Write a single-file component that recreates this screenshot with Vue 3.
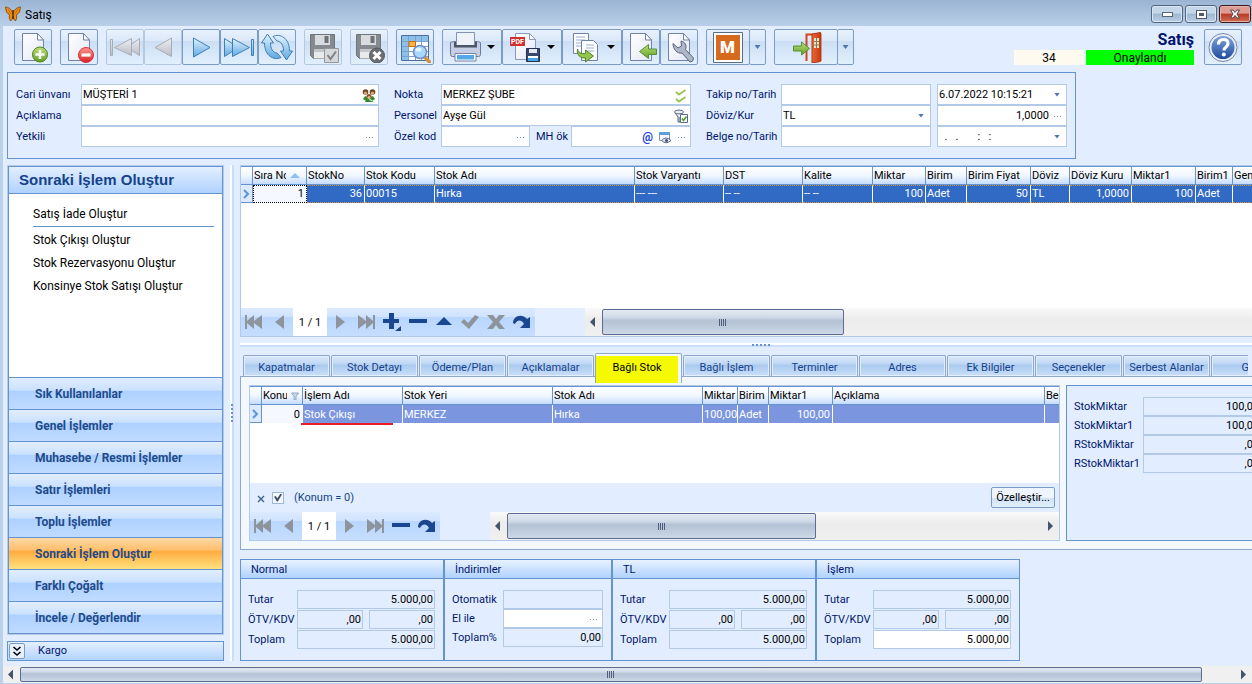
<script setup>
import { ref } from 'vue'

const toolGroups = [
  [{ icon: 'page-add', label: 'Yeni' }],
  [{ icon: 'page-del', label: 'Sil' }],
  [
    { icon: 'nav-first', label: 'İlk', off: true },
    { icon: 'nav-prev', label: 'Önceki', off: true },
    { icon: 'nav-next', label: 'Sonraki' },
    { icon: 'nav-last', label: 'Son' },
    { icon: 'refresh', label: 'Yenile' },
  ],
  [{ icon: 'save-ok', label: 'Kaydet', off: true }],
  [{ icon: 'save-cancel', label: 'Vazgeç', off: true }],
  [{ icon: 'find', label: 'Bul' }],
  [
    { icon: 'printer', label: 'Yazdır', menu: true },
    { icon: 'pdf', label: 'PDF', menu: true, mark: 'PDF' },
    { icon: 'copy', label: 'Kopyala', menu: true },
    { icon: 'page-back', label: 'Aktar' },
    { icon: 'page-tool', label: 'Ayarlar' },
  ],
]

const groups = [
  'Sık Kullanılanlar',
  'Genel İşlemler',
  'Muhasebe / Resmi İşlemler',
  'Satır İşlemleri',
  'Toplu İşlemler',
  'Sonraki İşlem Oluştur',
  'Farklı Çoğalt',
  'İncele / Değerlendir',
]
const activeGroup = ref('Sonraki İşlem Oluştur')

const actions = ['Satış İade Oluştur', 'Stok Çıkışı Oluştur', 'Stok Rezervasyonu Oluştur', 'Konsinye Stok Satışı Oluştur']

const stockCols = [
  { title: 'Sıra No', w: 54, value: '1', num: true, sort: true },
  { title: 'StokNo', w: 58, value: '36', num: true },
  { title: 'Stok Kodu', w: 70, value: '00015' },
  { title: 'Stok Adı', w: 200, value: 'Hırka' },
  { title: 'Stok Varyantı', w: 89, value: '--- ---' },
  { title: 'DST', w: 79, value: '-- --' },
  { title: 'Kalite', w: 70, value: '-- --' },
  { title: 'Miktar', w: 53, value: '100', num: true },
  { title: 'Birim', w: 41, value: 'Adet' },
  { title: 'Birim Fiyat', w: 64, value: '50', num: true },
  { title: 'Döviz', w: 39, value: 'TL' },
  { title: 'Döviz Kuru', w: 62, value: '1,0000', num: true },
  { title: 'Miktar1', w: 64, value: '100', num: true },
  { title: 'Birim1', w: 37, value: 'Adet' },
  { title: 'Genel', w: 60, value: '' },
]

const linkedCols = [
  { title: 'Konum', w: 41, value: '0', num: true, filter: true },
  { title: 'İşlem Adı', w: 100, value: 'Stok Çıkışı' },
  { title: 'Stok Yeri', w: 150, value: 'MERKEZ' },
  { title: 'Stok Adı', w: 150, value: 'Hırka' },
  { title: 'Miktar', w: 35, value: '100,00' },
  { title: 'Birim', w: 31, value: 'Adet' },
  { title: 'Miktar1', w: 64, value: '100,00', num: true },
  { title: 'Açıklama', w: 212, value: '' },
  { title: 'Belge', w: 60, value: '' },
]

const tabs = [
  'Kapatmalar', 'Stok Detayı', 'Ödeme/Plan', 'Açıklamalar', 'Bağlı Stok', 'Bağlı İşlem',
  'Terminler', 'Adres', 'Ek Bilgiler', 'Seçenekler', 'Serbest Alanlar', 'Gider',
]
const activeTab = ref('Bağlı Stok')

const recordNav = ['r-next', 'r-last', 'r-add', 'r-minus', 'r-up', 'r-check', 'r-cross', 'r-redo']
const linkedNav = ['r-next', 'r-last', 'r-minus', 'r-redo']
const coloured = ['r-add', 'r-minus', 'r-up', 'r-redo']

const amounts = [
  { label: 'StokMiktar', value: '100,00' },
  { label: 'StokMiktar1', value: '100,00' },
  { label: 'RStokMiktar', value: ',00' },
  { label: 'RStokMiktar1', value: ',00' },
]

const totals = [
  { title: 'Normal', rows: [['Tutar', '5.000,00'], ['ÖTV/KDV', ',00', ',00'], ['Toplam', '5.000,00']] },
  { title: 'İndirimler', small: true, rows: [['Otomatik', ''], ['El ile', ''], ['Toplam%', '0,00']], open: 1, more: true },
  { title: 'TL', rows: [['Tutar', '5.000,00'], ['ÖTV/KDV', ',00', ',00'], ['Toplam', '5.000,00']] },
  { title: 'İşlem', rows: [['Tutar', '5.000,00'], ['ÖTV/KDV', ',00', ',00'], ['Toplam', '5.000,00']], open: 2 },
]
</script>

<template>
  <div class="window">
    <svg class="sprite" aria-hidden="true">
      <defs>
        <linearGradient id="g-page" x1="0" y1="0" x2="1" y2="1">
          <stop offset="0" stop-color="#ffffff" /><stop offset="1" stop-color="#e3e8f5" />
        </linearGradient>
        <linearGradient id="g-blue" x1="0" y1="0" x2="0" y2="1">
          <stop offset="0" stop-color="#e2f3ff" /><stop offset="1" stop-color="#5fa9e2" />
        </linearGradient>
        <linearGradient id="g-grey" x1="0" y1="0" x2="0" y2="1">
          <stop offset="0" stop-color="#eceef1" /><stop offset="1" stop-color="#b9bec6" />
        </linearGradient>
        <linearGradient id="g-green" x1="0" y1="0" x2="0" y2="1">
          <stop offset="0" stop-color="#c0e07c" /><stop offset="1" stop-color="#5f9f22" />
        </linearGradient>
        <linearGradient id="g-red" x1="0" y1="0" x2="0" y2="1">
          <stop offset="0" stop-color="#ff9a92" /><stop offset="1" stop-color="#d61f24" />
        </linearGradient>
        <linearGradient id="g-help" x1="0" y1="0" x2="0" y2="1">
          <stop offset="0" stop-color="#7fa3dc" /><stop offset="1" stop-color="#1f4b9c" />
        </linearGradient>
        <linearGradient id="g-door" x1="0" y1="0" x2="1" y2="0">
          <stop offset="0" stop-color="#ee6636" /><stop offset="1" stop-color="#c43c12" />
        </linearGradient>
      </defs>
      <symbol id="page" viewBox="0 0 32 32">
        <path d="M5.500 2.500h15l6 6.500v20.500h-21z" fill="url(#g-page)" stroke="#7082a8" />
        <path d="M20.500 2.500v6.500h6z" fill="#fff" stroke="#7082a8" />
      </symbol>
      <symbol id="page-add" viewBox="0 0 32 32">
        <use href="#page" />
        <circle cx="23" cy="23.500" r="7.500" fill="url(#g-green)" stroke="#4d7f20" />
        <path d="M23 19v9M18.500 23.500h9" stroke="#fff" stroke-width="2.600" />
      </symbol>
      <symbol id="page-del" viewBox="0 0 32 32">
        <use href="#page" />
        <circle cx="23" cy="24" r="7.500" fill="url(#g-red)" stroke="#d8333a" />
        <path d="M18.500 24h9" stroke="#fff" stroke-width="3.200" />
      </symbol>
      <symbol id="nav-first" viewBox="0 0 32 32">
        <g fill="url(#g-grey)" stroke="#a7acb5">
          <path d="M1.500 8.500h2v16h-2zM30.500 7.500v17L18 16.500z" /><path d="M22.500 7.500v17L5.500 16.500z" />
        </g>
      </symbol>
      <symbol id="nav-prev" viewBox="0 0 32 32">
        <path d="M24.500 7v18.500L8 16.500z" fill="url(#g-grey)" stroke="#a7acb5" />
      </symbol>
      <symbol id="nav-next" viewBox="0 0 32 32">
        <path d="M8.500 7v19l16.500-9.500z" fill="url(#g-blue)" stroke="#3f7eb5" />
      </symbol>
      <symbol id="nav-last" viewBox="0 0 32 32">
        <g fill="url(#g-blue)" stroke="#3f7eb5">
          <path d="M28.500 8.500h2v16h-2zM1.500 7.500v18l14-9z" /><path d="M9.500 7.500v18l17-9z" />
        </g>
      </symbol>
      <symbol id="refresh" viewBox="0 0 32 32">
        <g fill="url(#g-blue)" stroke="#3f7eb5" stroke-linejoin="round">
          <path d="M6.500 3l6 9h-3c0 6 2.500 9.500 6.500 10l4 4.500C13 30 3.500 25 3.500 12h-3z" />
          <path d="M25.500 29l-6-9h3c0-6-2.500-9.500-6.500-10l-4-4.500C19 2 28.500 7 28.500 20h3z" />
        </g>
      </symbol>
      <symbol id="disk" viewBox="0 0 32 32">
        <path d="M3.500 3.500h24v24h-21l-3-3z" fill="#858a90" stroke="#6f747a" />
        <path d="M8 4h15v10H8z" fill="#d9dcdf" /><path d="M17.500 5h4v7h-4z" fill="#6d7278" />
        <path d="M7 18h17v9.500H7z" fill="#e8eaec" /><path d="M7 18h17v3H7z" fill="#c4c7ca" />
      </symbol>
      <symbol id="save-ok" viewBox="0 0 32 32">
        <use href="#disk" />
        <path d="M17.500 17.500h14v14h-14z" fill="#d5d7da" stroke="#93979c" />
        <path d="M20.500 24l3 4 5.500-7.500" fill="none" stroke="#7e8388" stroke-width="2" />
      </symbol>
      <symbol id="save-cancel" viewBox="0 0 32 32">
        <use href="#disk" />
        <circle cx="24" cy="24.500" r="7.500" fill="#6b6f74" stroke="#55595e" />
        <path d="M20.500 21l7 7M27.500 21l-7 7" stroke="#fff" stroke-width="3" />
      </symbol>
      <symbol id="find" viewBox="0 0 32 32">
        <path d="M2.500 4.500h27v25h-27z" fill="#fff" stroke="#4c6f9e" />
        <path d="M3 5h26v5H3zM3 5h6v24H3z" fill="#8cc0e8" />
        <path d="M3 10.500h26M3 15.500h26M3 20.500h26M3 25.500h26M9.500 5v24M16.500 5v24M22.500 5v24" stroke="#7aa2cf" />
        <path d="M10 10.500h6.500v5H10z" fill="#ffb240" stroke="#c46d10" />
        <path d="M25.500 26l5 5" stroke="#d3904a" stroke-width="3.500" stroke-linecap="round" />
        <circle cx="21" cy="21" r="6.500" fill="#a8d8ff" stroke="#6f8fc6" stroke-width="1.500" />
        <ellipse cx="19.500" cy="18.500" rx="3" ry="2" fill="#e8f6ff" />
      </symbol>
      <symbol id="printer" viewBox="0 0 32 32">
        <path d="M1.500 11.500l3-1h24l3 1v12q0 2-2 2h-26q-2 0-2-2z" fill="#c5cee2" stroke="#6d7a99" />
        <path d="M7.500 1.500h18v13h-18z" fill="#eef2fa" stroke="#8391b3" />
        <path d="M5 11h2v3h19v-3h2v5.500H5z" fill="#4b5469" /><path d="M6 22.500h21v7.500H6z" fill="#fff" stroke="#7383a5" />
        <path d="M8 24h17v4.500H8z" fill="#54a8e6" />
      </symbol>
      <symbol id="pdf" viewBox="0 0 32 32">
        <path d="M6.500 2.500h14l6 6v20h-20z" fill="url(#g-page)" stroke="#8b98b8" />
        <path d="M20.500 2.500v6h6z" fill="#fff" stroke="#8b98b8" />
        <path d="M1 6h15v9H1z" fill="#cf3030" />
        <path d="M17.500 17.500h13v13h-13z" fill="#38476a" stroke="#253252" />
        <path d="M20 18h8v4h-8z" fill="#e3e8f2" /><path d="M19 25h10v5H19z" fill="#fff" /><path d="M19 27h10v3H19z" fill="#45a5e8" />
      </symbol>
      <symbol id="copy" viewBox="0 0 32 32">
        <path d="M4.500 2.500h15v20h-15z" fill="#fbfcff" stroke="#7082a8" />
        <path d="M7 6h9M7 9h9M7 12h9M7 15h6" stroke="#9eb0d2" />
        <path d="M12.500 9.500h12l4 4v16h-16z" fill="#fbfcff" stroke="#7082a8" />
        <path d="M17 14h8M17 17h8M17 20h8" stroke="#9eb0d2" />
        <path d="M8.500 18c1 4 4 5 8 4.500v-3.500l8 6-8 6v-4c-5 .5-9-3-8-9z" fill="#93c44b" stroke="#55862a" />
      </symbol>
      <symbol id="arrow-green" viewBox="0 0 32 32">
        <path d="M31.500 18v5.500h-8v4l-9-7 9-7V18z" fill="url(#g-green)" stroke="#568f38" />
      </symbol>
      <symbol id="page-back" viewBox="0 0 32 32"><use href="#page" /><use href="#arrow-green" /></symbol>
      <symbol id="page-tool" viewBox="0 0 32 32">
        <use href="#page" />
        <path d="M10 12.500l5 4.500 3.500-2-.5-5c4 1 6 4 4.500 8.500l8 8.500q0 4-3.500 4l-8-9c-5 1-9-4-9-9.500z" fill="#aeb7c8" stroke="#58637c" />
      </symbol>
      <symbol id="module" viewBox="0 0 32 32">
        <path d="M1.500 1.500h29v30h-29z" fill="#fff" stroke="#5e6a80" />
        <path d="M4 4h24v25H4z" fill="#d66a1f" />
      </symbol>
      <symbol id="door" viewBox="0 0 32 32">
        <path d="M16.500 30V3.500h14V30" fill="none" stroke="#d2451e" stroke-width="2" />
        <path d="M22 3l8.500-1.500v29L22 32z" fill="url(#g-door)" stroke="#b03a14" />
        <path d="M24 7h5v10h-5z" fill="#e4e8c8" /><path d="M26.500 7v10M24 10.500h5M24 14h5" stroke="#8c7850" />
        <path d="M3.500 15h8v-4l8 6.500-8 6.500v-4h-8z" fill="url(#g-green)" stroke="#568f38" />
      </symbol>
      <symbol id="help" viewBox="0 0 32 32">
        <circle cx="16" cy="16.500" r="14" fill="#e9eef7" stroke="#7688ac" />
        <circle cx="16" cy="16.500" r="11.500" fill="url(#g-help)" />
        <path d="M11.500 13.500q0-5 5-5 4.500 0 4.500 4 0 2-2.500 4-1.500 1-1.500 3" fill="none" stroke="#fff" stroke-width="3.200" />
        <circle cx="16.800" cy="23.500" r="2" fill="#fff" />
      </symbol>

      <symbol id="r-first" viewBox="0 0 20 20"><path d="M1 3h2v6l7-6v6l8-6v14l-8-6v6l-7-6v6H1z" /></symbol>
      <symbol id="r-prev" viewBox="0 0 20 20"><path d="M14 3v14L5 10z" /></symbol>
      <symbol id="r-next" viewBox="0 0 20 20"><path d="M6 3v14l9-7z" /></symbol>
      <symbol id="r-last" viewBox="0 0 20 20"><path d="M19 3h-2v6l-7-6v6L2 3v14l8-6v6l7-6v6h2z" /></symbol>
      <symbol id="r-add" viewBox="0 0 20 20"><path d="M7 1h5v6h5v4h-5v6H7v-6H1V7h6zM19 14v5h-6z" /></symbol>
      <symbol id="r-minus" viewBox="0 0 20 20"><path d="M1 7h18v4H1z" /></symbol>
      <symbol id="r-up" viewBox="0 0 20 20"><path d="M10 5l8 8H2z" /></symbol>
      <symbol id="r-check" viewBox="0 0 20 20"><path d="M1 10l3-3 4 4 7-8 4 2-10 12z" /></symbol>
      <symbol id="r-cross" viewBox="0 0 20 20"><path d="M1 3h6l3 4 3-4h6l-6 7 6 7h-6l-3-4-3 4H1l6-7z" /></symbol>
      <symbol id="r-redo" viewBox="0 0 20 20"><path d="M1 11C1 4 10 1 15 7l3-2v11H8l4-4c-3-5-7-4-9 0z" /></symbol>

      <symbol id="people" viewBox="0 0 16 16">
        <path d="M2 12q1.500-3 3-3l3 4-3 1zM14 12q-1.500-3-3-3l-3 4 3 1zM4 15q1-3 4-3t4 3z" fill="#2f8b2f" />
        <circle cx="4.500" cy="5" r="2.800" fill="#6b4420" /><circle cx="11.500" cy="5" r="2.800" fill="#6b4420" />
        <circle cx="4.500" cy="6" r="1.600" fill="#e0a878" /><circle cx="11.500" cy="6" r="1.600" fill="#e0a878" />
        <circle cx="8" cy="9.500" r="2.500" fill="#8a5325" /><circle cx="8" cy="10.500" r="1.500" fill="#e8b88c" />
      </symbol>
      <symbol id="checks" viewBox="0 0 16 16">
        <path d="M3 5l3 2.500L12.500 3M3 12l3 2.500L12.500 10" fill="none" stroke="#9cc455" stroke-width="2" />
      </symbol>
      <symbol id="pick" viewBox="0 0 16 16">
        <ellipse cx="6" cy="4" rx="4.500" ry="2" fill="#e8ecf2" stroke="#5b6b85" />
        <path d="M2 5l3 4v5h2V9" fill="#c6cfdd" stroke="#5b6b85" />
        <path d="M7.500 6.500h7v8h-7z" fill="#fff" stroke="#5b6b85" />
        <path d="M9 10.500l1.500 2 3-4" fill="none" stroke="#4aa02c" stroke-width="1.600" />
      </symbol>
      <symbol id="view" viewBox="0 0 16 16">
        <path d="M2.500 3.500h10v8h-10z" fill="#f5f8fc" stroke="#8494ae" /><path d="M2 3h11v3H2z" fill="#5f9ed8" />
        <path d="M4.500 11.500q4.500-5 9.500 0-5 4.500-9.500 0z" fill="#e4eaf3" stroke="#5b6b85" /><circle cx="9.500" cy="11.500" r="1.500" fill="#43536f" />
      </symbol>
      <symbol id="butterfly" viewBox="0 0 16 16">
        <path d="M8 8C7 3 3 1 .5 1q0 6 4 8-1 3 1 6 2-1 2.500-5 .5 4 2.500 5 2-3 1-6 4-2 4-8C13 1 9 3 8 8z" fill="#f08c10" stroke="#7a4505" stroke-width=".8" />
        <path d="M8 4v9" stroke="#4e2c05" stroke-width="1.400" /><path d="M3 3l3 5M13 3l-3 5" stroke="#a85a08" stroke-width=".6" />
      </symbol>
    </svg>

    <header class="titlebar">
      <svg class="logo"><use href="#butterfly" /></svg>
      <span class="caption">Satış</span>
      <button class="winbtn" aria-label="Simge durumuna küçült"><i class="min"></i></button>
      <button class="winbtn" aria-label="Önceki boyut"><i class="max"></i></button>
      <button class="winbtn close" aria-label="Kapat">
        <svg viewBox="0 0 12 10"><path d="M1.500 1h2.500l2 2.500L8 1h2.500L8 5l2.500 4H8L6 6.500 4 9H1.500L4 5z" fill="#fff" stroke="#55404a" /></svg>
      </button>
    </header>

    <div class="client">
      <div class="toolbar">
        <div v-for="(group, i) in toolGroups" :key="i" class="toolgroup">
          <button v-for="t in group" :key="t.icon" class="tool" :class="{ off: t.off, menu: t.menu }" :aria-label="t.label">
            <svg class="big"><use :href="'#' + t.icon" /><text v-if="t.mark" class="pdfmark" x="2" y="13">{{ t.mark }}</text></svg>
            <i v-if="t.menu" class="caret black"></i>
          </button>
        </div>
        <div class="toolgroup split">
          <button class="tool" aria-label="Modül"><svg class="big"><use href="#module" /><text class="modmark" x="8" y="22">M</text></svg></button>
          <button class="tool drop" aria-label="Modül menüsü"><i class="caret"></i></button>
        </div>
        <div class="toolgroup split wide">
          <button class="tool" aria-label="Çıkış"><svg class="big"><use href="#door" /></svg></button>
          <button class="tool drop" aria-label="Çıkış menüsü"><i class="caret"></i></button>
        </div>
        <div class="status">
          <strong>Satış</strong>
          <div class="badges"><span class="docno">34</span><span class="state">Onaylandı</span></div>
        </div>
        <button class="tool" aria-label="Yardım"><svg class="big"><use href="#help" /></svg></button>
      </div>

      <form class="panel" @submit.prevent>
        <div class="formcol first">
          <div class="formrow"><label for="cari">Cari ünvanı</label><div class="field"><input id="cari" value="MÜŞTERİ 1"><svg class="mini"><use href="#people" /></svg></div></div>
          <div class="formrow"><label for="aciklama">Açıklama</label><div class="field"><input id="aciklama"></div></div>
          <div class="formrow"><label for="yetkili">Yetkili</label><div class="field"><input id="yetkili"><button class="dots" aria-label="Seç"></button></div></div>
        </div>
        <div class="formcol second">
          <div class="formrow"><label for="nokta">Nokta</label><div class="field"><input id="nokta" value="MERKEZ ŞUBE"><svg class="mini"><use href="#checks" /></svg></div></div>
          <div class="formrow"><label for="personel">Personel</label><div class="field"><input id="personel" value="Ayşe Gül"><svg class="mini"><use href="#pick" /></svg></div></div>
          <div class="formrow">
            <label for="ozel">Özel kod</label><div class="field code"><input id="ozel"><button class="dots" aria-label="Seç"></button></div>
            <label for="mh" class="inner">MH ök</label><div class="field"><input id="mh"><span class="at">@</span><svg class="mini"><use href="#view" /></svg><button class="dots" aria-label="Seç"></button></div>
          </div>
        </div>
        <div class="formcol third">
          <div class="formrow"><label for="takip">Takip no/Tarih</label><div class="field"><input id="takip"></div></div>
          <div class="formrow"><label for="doviz">Döviz/Kur</label><div class="field"><select id="doviz"><option>TL</option></select><i class="caret"></i></div></div>
          <div class="formrow"><label for="belge">Belge no/Tarih</label><div class="field"><input id="belge"></div></div>
        </div>
        <div class="formcol fourth">
          <div class="formrow"><div class="field"><input value="6.07.2022 10:15:21" aria-label="Takip tarihi"><i class="caret"></i></div></div>
          <div class="formrow"><div class="field"><input class="right" value="1,0000" aria-label="Kur"><button class="dots" aria-label="Seç"></button></div></div>
          <div class="formrow"><div class="field"><input value="  .   .       :   :" aria-label="Belge tarihi"><i class="caret"></i></div></div>
        </div>
      </form>

      <div class="body">
        <aside class="sidebar">
          <nav class="navbox">
            <h2>{{ activeGroup }}</h2>
            <ul>
              <li v-for="a in actions" :key="a"><a href="#">{{ a }}</a></li>
            </ul>
            <button v-for="g in groups" :key="g" class="group" :class="{ active: g === activeGroup }" @click="activeGroup = g">{{ g }}</button>
          </nav>
          <div class="cargo">
            <button aria-label="Genişlet"><svg viewBox="0 0 12 12"><path d="M2.500 2l3.500 3L9.500 2M2.500 7L6 10l3.500-3" fill="none" stroke="#000" stroke-width="1.600" /></svg></button>
            <span>Kargo</span>
          </div>
        </aside>
        <div class="vsplit"><i v-for="n in 5" :key="n"></i></div>

        <main class="content">
          <section class="grid stock">
            <div class="tablewrap">
              <table>
                <colgroup><col class="ind"><col v-for="c in stockCols" :key="c.title" :style="{ width: c.w + 'px' }"></colgroup>
                <thead>
                  <tr>
                    <th></th>
                    <th v-for="c in stockCols" :key="c.title"><div class="th"><span>{{ c.title }}</span><i v-if="c.sort" class="sort"></i></div></th>
                  </tr>
                </thead>
                <tbody>
                  <tr>
                    <td class="mark"><svg viewBox="0 0 10 12"><path d="M3 2l4 4-4 4" /></svg></td>
                    <td v-for="(c, i) in stockCols" :key="c.title" :class="{ num: c.num, focus: i === 0 }">{{ c.value }}</td>
                  </tr>
                </tbody>
              </table>
            </div>
            <div class="footer">
              <div class="recnav">
                <button aria-label="r-first"><svg><use href="#r-first" /></svg></button>
                <button aria-label="r-prev"><svg><use href="#r-prev" /></svg></button>
                <span>1 / 1</span>
                <button v-for="n in recordNav" :key="n" :aria-label="n" :class="{ on: coloured.includes(n) }"><svg><use :href="'#' + n" /></svg></button>
              </div>
              <div class="hscroll">
                <i class="arrow left"></i><div class="thumb"></div>
              </div>
            </div>
          </section>

          <div class="hsplit"><i v-for="n in 5" :key="n"></i></div>

          <div class="tabs" role="tablist">
            <button v-for="t in tabs" :key="t" role="tab" :class="{ active: t === activeTab }" @click="activeTab = t"><span>{{ t }}</span></button>
          </div>
          <section class="tabpage">
            <div class="grid linked">
              <div class="tablewrap">
                <table>
                  <colgroup><col class="ind"><col v-for="c in linkedCols" :key="c.title" :style="{ width: c.w + 'px' }"></colgroup>
                  <thead>
                    <tr>
                      <th></th>
                      <th v-for="c in linkedCols" :key="c.title">
                        <div class="th"><span>{{ c.title }}</span><svg v-if="c.filter" class="funnel" viewBox="0 0 8 8"><path d="M.5 1h7L5 4.500V8H3V4.500z" fill="#c7d6ea" stroke="#8ea9cc" /></svg></div>
                      </th>
                    </tr>
                  </thead>
                  <tbody>
                    <tr>
                      <td class="mark"><svg viewBox="0 0 10 12"><path d="M3 2l4 4-4 4" /></svg></td>
                      <td v-for="(c, i) in linkedCols" :key="c.title" :class="{ num: c.num, focus: i === 0 }">{{ c.value }}</td>
                    </tr>
                  </tbody>
                </table>
                <div class="underline"></div>
              </div>
              <div class="filterbar">
                <button class="clear" aria-label="Filtreyi kaldır"><svg viewBox="0 0 8 8"><path d="M1 1l6 6M7 1L1 7" stroke="#3f5f8f" stroke-width="1.400" /></svg></button>
                <input id="flt" type="checkbox" checked>
                <label for="flt">(Konum = 0)</label>
                <button class="custom">Özelleştir...</button>
              </div>
              <div class="footer">
                <div class="recnav">
                  <button aria-label="r-first"><svg><use href="#r-first" /></svg></button>
                  <button aria-label="r-prev"><svg><use href="#r-prev" /></svg></button>
                  <span>1 / 1</span>
                  <button v-for="n in linkedNav" :key="n" :aria-label="n" :class="{ on: coloured.includes(n) }"><svg><use :href="'#' + n" /></svg></button>
                </div>
                <div class="hscroll">
                  <i class="arrow left"></i><div class="thumb"></div><i class="arrow end"></i>
                </div>
              </div>
            </div>
            <div class="amounts">
              <div v-for="(a, i) in amounts" :key="a.label" class="amountrow">
                <label :for="'amt' + i">{{ a.label }}</label>
                <div class="field locked"><input :id="'amt' + i" class="right" :value="a.value" readonly></div>
              </div>
            </div>
          </section>

          <section class="totals">
            <fieldset v-for="(box, b) in totals" :key="box.title" :class="{ small: box.small }" :aria-label="box.title">
              <h3>{{ box.title }}</h3>
              <div class="rows">
                <div v-for="(r, i) in box.rows" :key="r[0]" class="totalrow" :class="{ pair: r.length > 2 }">
                  <label :for="`t${b}${i}`">{{ r[0] }}</label>
                  <div class="field" :class="{ locked: box.open !== i }">
                    <input :id="`t${b}${i}`" class="right" :value="r[1]">
                    <button v-if="box.more && box.open === i" class="dots" aria-label="Seç"></button>
                  </div>
                  <div v-if="r.length > 2" class="field locked"><input class="right" :value="r[2]" aria-label="KDV"></div>
                </div>
              </div>
            </fieldset>
          </section>
        </main>
      </div>

      <div class="pagescroll">
        <i class="arrow left"></i><div class="thumb"></div><i class="arrow"></i>
      </div>
    </div>
  </div>
</template>

<style>
body {
  background: #b9d1ea;
}
</style>

<style scoped>
* {
  box-sizing: border-box;
}

.window {
  display: flex;
  flex-direction: column;
  height: 100vh;
  min-height: 620px;
  overflow: hidden;
  background: #b9d1ea;
  color: #00156e;
  font: 11px/14px Roboto, "Noto Sans", sans-serif;
}

button, input, select {
  font: inherit;
  color: inherit;
  margin: 0;
  padding: 0;
  border: 0;
  background: none;
  border-radius: 0;
}

.sprite {
  position: absolute;
  width: 0;
  height: 0;
}

.titlebar {
  display: flex;
  align-items: flex-start;
  gap: 2px;
  flex: none;
  height: 26px;
  padding: 5px 1px 0 5px;
  background: linear-gradient(#9ab4d2, #b9cfe8);
  color: #000;
}

.logo {
  width: 16px;
  height: 16px;
  margin-top: 1px;
}

.caption {
  flex: 1;
  margin: 3px 0 0 2px;
  font-size: 12px;
}

.winbtn {
  display: flex;
  align-items: center;
  justify-content: center;
  width: 32px;
  height: 18px;
  border: 1px solid #52667f;
  border-radius: 3px;
  background: linear-gradient(#c5d6e8 45%, #9fb8d2 50%, #b8cee4);
  box-shadow: inset 0 0 0 1px #d8e5f2;
}

.winbtn .min {
  width: 11px;
  height: 5px;
  border: 1px solid #5a6472;
  background: #fff;
}

.winbtn .max {
  width: 11px;
  height: 9px;
  border: 1px solid #4f5866;
  background: #4f5866;
  box-shadow: inset 0 0 0 2px #fff;
}

.winbtn.close {
  border-color: #44141c;
  background: linear-gradient(#dd9c92 45%, #b93a24 50%, #cd6f50);
  box-shadow: inset 0 0 0 1px #e5b0a6;
}

.winbtn svg {
  width: 12px;
  height: 10px;
}

.client {
  display: flex;
  flex-direction: column;
  flex: 1;
  min-height: 0;
  margin-left: 3px;
  margin-bottom: 1px;
  background: #e2eeff;
}

.toolbar {
  display: flex;
  gap: 8px;
  padding: 3px 10px 7px 11px;
}

.toolgroup {
  display: flex;
}

.tool {
  display: flex;
  align-items: center;
  justify-content: center;
  flex: none;
  width: 38px;
  height: 36px;
  border: 1px solid #7b9cc4;
  border-radius: 2px;
  background: linear-gradient(#e9f2fd 0, #dbe8f8 32%, #cbdef4 33%, #e2f0fd);
}

.tool.off {
  border-color: #b4c8e0;
}

.tool.menu {
  width: 60px;
  gap: 6px;
}

.big {
  width: 32px;
  height: 32px;
}

.pdfmark {
  fill: #fff;
  font-size: 7px;
  font-weight: 700;
}

.modmark {
  fill: #fff;
  font-size: 17px;
  font-weight: 900;
}

.split .tool:first-child {
  width: 44px;
}

.split.wide .tool:first-child {
  width: 64px;
}

.split .tool.drop {
  width: 17px;
  margin-left: -1px;
}

.caret {
  flex: none;
  width: 6px;
  height: 4px;
  background: #4a77b4;
  clip-path: polygon(0 0, 100% 0, 50% 100%);
}

.caret.black {
  width: 8px;
  background: #000;
}

.status {
  display: flex;
  flex-direction: column;
  align-items: flex-end;
  margin-left: auto;
  margin-right: 2px;
}

.status strong {
  height: 21px;
  font-size: 16px;
  line-height: 22px;
}

.badges {
  display: flex;
  gap: 2px;
  color: #000;
  font-size: 12px;
  line-height: 16px;
  text-align: center;
}

.badges span {
  height: 15px;
}

.docno {
  width: 70px;
  background: #fffaf0;
}

.state {
  width: 108px;
  background: #00ff00;
}

.panel {
  display: flex;
  align-self: flex-start;
  gap: 15px;
  flex: none;
  height: 87px;
  margin-left: 4px;
  padding: 11px 8px;
  border: 1px solid #6593cf;
}

.formrow {
  display: flex;
  align-items: center;
  height: 21px;
}

.formrow .field {
  flex: 1;
  height: 21px;
}

.first {
  width: 363px;
}

.second {
  width: 297px;
}

.third {
  width: 225px;
}

.fourth {
  width: 130px;
  margin-left: -9px;
}

.first label {
  width: 65px;
}

.second label {
  width: 47px;
}

.second .inner {
  width: 41px;
  padding-left: 6px;
}

.third label {
  width: 75px;
}

.formrow .code {
  flex: none;
  width: 89px;
}

.field {
  display: flex;
  align-items: center;
  min-width: 0;
  border: 1px solid #b2cae8;
  background: #fff;
  color: #000;
}

.field input, .field select {
  flex: 1;
  width: 100%;
  min-width: 0;
  height: 17px;
  padding: 0 1px;
  outline: 0;
  appearance: none;
  white-space: pre;
}

.field .right {
  text-align: right;
}

.field .caret {
  margin-right: 6px;
}

.field.locked {
  background: #e2eeff;
}

.mini {
  flex: none;
  width: 16px;
  height: 16px;
  margin-right: 1px;
}

.at {
  margin-right: 4px;
  color: #1a3fd8;
  font-size: 12px;
  font-weight: 700;
}

.dots {
  flex: none;
  width: 16px;
  height: 16px;
  background: repeating-linear-gradient(90deg, #6f93c2 0 1px, transparent 1px 3px) 4px 8px / 8px 1px no-repeat;
}

.body {
  display: flex;
  flex: 1;
  min-height: 0;
  margin: 6px 0 5px 4px;
}

.sidebar {
  display: flex;
  flex-direction: column;
  flex: none;
  gap: 6px;
  width: 217px;
}

.navbox {
  display: flex;
  flex-direction: column;
  flex: 1;
  min-height: 0;
  margin: 1px;
  border: 1px solid #6593cf;
  outline: 1px solid #b4cbea;
  background: #fff;
}

.navbox h2 {
  flex: none;
  height: 27px;
  margin: 0;
  padding-left: 10px;
  border-bottom: 1px solid #6593cf;
  background: linear-gradient(#e3efff, #afd2ff);
  color: #15428b;
  font: bold 15px/26px "Liberation Sans", Arial, sans-serif;
}

.navbox ul {
  flex: 1;
  margin: 0;
  padding: 9px 8px 0 24px;
  list-style: none;
}

.navbox li {
  height: 23px;
  font-size: 12px;
  line-height: 23px;
}

.navbox li:first-child {
  height: 24px;
  margin-bottom: 2px;
  border-bottom: 1px solid #6593cf;
}

.navbox a {
  color: #000;
  text-decoration: none;
}

.group {
  flex: none;
  height: 32px;
  padding-left: 26px;
  border-top: 1px solid #6593cf;
  background: linear-gradient(#e0edff 0, #cbe1ff 40%, #add1ff 41%, #c0dbff);
  color: #1e4a8c;
  font-size: 12px;
  font-weight: 700;
  text-align: left;
}

.group.active {
  background: linear-gradient(#ffd9a5 0, #ffbd69 40%, #ffab3f 41%, #fee17e);
}

.cargo {
  display: flex;
  align-items: center;
  gap: 13px;
  flex: none;
  height: 20px;
  padding-left: 1px;
  border: 1px solid #6593cf;
  background: linear-gradient(#e3efff, #b3d4ff);
}

.cargo button {
  width: 16px;
  height: 16px;
  border: 1px solid #7b9cc4;
  border-radius: 2px;
  background: #e6f1fd;
}

.cargo svg {
  display: block;
  width: 12px;
  height: 12px;
  margin: 1px;
}

.vsplit {
  display: flex;
  flex-direction: column;
  align-items: center;
  justify-content: center;
  flex: none;
  gap: 2px;
  width: 4px;
  margin: 0 6px;
  background: linear-gradient(90deg, #fff 50%, #c9defa 50%);
}

.vsplit i, .hsplit i {
  width: 2px;
  height: 2px;
  background: #6593cf;
}

.content {
  display: flex;
  flex-direction: column;
  flex: 1;
  min-width: 0;
  overflow: hidden;
}

.grid {
  display: flex;
  flex-direction: column;
  min-width: 0;
  border: 1px solid #b2cae8;
  background: #fff;
}

.stock {
  flex: 1;
  min-height: 100px;
  border-right: 0;
}

.tablewrap {
  flex: 1;
  min-height: 0;
  overflow: hidden;
}

table {
  width: 0;
  border-collapse: separate;
  border-spacing: 0;
  table-layout: fixed;
  color: #000;
}

.ind {
  width: 12px;
}

th, td {
  height: 18px;
  padding: 0 2px 0 1px;
  overflow: hidden;
  border-right: 1px solid #6593cf;
  font-weight: 400;
  line-height: 16px;
  text-align: left;
  white-space: nowrap;
}

th {
  height: 19px;
  padding: 0 1px;
  border-top: 1px solid #6593cf;
  border-bottom: 1px solid #6593cf;
  background: linear-gradient(#fff, #f1f7ff 50%, #c5dcff);
}

.th {
  display: flex;
  align-items: center;
  overflow: hidden;
}

.th span {
  flex: 1;
  overflow: hidden;
}

.sort {
  flex: none;
  width: 10px;
  height: 5px;
  margin: 0 5px 0 4px;
  background: #8fc0f8;
  clip-path: polygon(50% 0, 100% 100%, 0 100%);
}

.funnel {
  flex: none;
  width: 8px;
  height: 8px;
  margin: 0 2px 0 4px;
}

td {
  border-right-color: #fff;
  background: #316ac5;
  color: #fff;
}

.stock td {
  border-top: 1px dotted #ce953a;
  border-bottom: 1px dotted #ce953a;
}

.linked td {
  background: #7b96df;
}

.linked tbody td {
  line-height: 15px;
}

.num {
  text-align: right;
}

.stock td.focus, .linked td.focus {
  background: #f5f9ff;
  color: #000;
}

.stock td.focus {
  border: 1px dotted #000;
}

.stock td.mark, .linked td.mark {
  padding: 0;
  border: 0 solid #6593cf;
  border-width: 0 1px 1px 0;
  background: #dceaff;
}

.mark svg {
  display: block;
  width: 10px;
  height: 12px;
  fill: none;
  stroke: #5d95dc;
  stroke-width: 2;
}

.footer {
  display: flex;
  flex: none;
  height: 28px;
  background: #e2eeff;
}

.recnav {
  display: flex;
  flex: none;
  background: linear-gradient(#dbeaff 0, #cfe3ff 32%, #b8d6ff 33%, #c6deff);
}

.recnav span {
  width: 34px;
  background: #fff;
  color: #000;
  line-height: 29px;
  text-align: center;
}

.recnav button {
  width: 26px;
}

.recnav svg {
  display: block;
  width: 20px;
  height: 20px;
  margin: 0 auto;
  fill: #8e949c;
}

.recnav .on svg {
  fill: #1b4690;
}

.hscroll {
  display: flex;
  align-items: center;
  flex: 1;
  min-width: 0;
  margin-left: 50px;
  background: linear-gradient(#fafafa, #ececec 40%, #f0f0f0);
}

.arrow {
  flex: none;
  width: 17px;
  height: 10px;
  background: #44546f;
  clip-path: polygon(6px 0, 11px 50%, 6px 100%);
}

.arrow.left {
  clip-path: polygon(10px 0, 5px 50%, 10px 100%);
}

.arrow.end {
  margin-left: auto;
}

.thumb {
  flex: none;
  width: 242px;
  height: 26px;
  border: 1px solid #5b6d92;
  border-radius: 2px;
  background: repeating-linear-gradient(90deg, #4e5d7c 0 1px, transparent 1px 2px) center / 8px 7px no-repeat,
    linear-gradient(#e3e9f1 0, #d0dae7 30%, #b4c2d5 45%, #c2cfdf 80%, #cfdae7);
}

.linked .thumb {
  width: 309px;
}

.hsplit {
  display: flex;
  align-items: center;
  justify-content: center;
  flex: none;
  gap: 2px;
  height: 4px;
  margin: 6px 0;
  padding-left: 30px;
  background: linear-gradient(#fff 50%, #c9defa 50%);
}

.tabs {
  display: flex;
  flex: none;
  gap: 1px;
  height: 23px;
  margin-right: 4px;
  padding: 2px 0 0 3px;
  clip-path: inset(0 0 -8px 0);
}

.tabs button {
  flex: none;
  width: 87px;
  height: 21px;
  border: 1px solid #8ea5cd;
  border-bottom: 0;
  border-radius: 2px 2px 0 0;
  background: linear-gradient(#dce9fa 0, #bed6f4 40%, #aac9ef 45%, #cadffa);
  box-shadow: inset 0 0 0 1px #e4effc;
  color: #15428b;
  line-height: 23px;
  white-space: nowrap;
}

.tabs .active {
  z-index: 1;
  height: 30px;
  margin-top: -2px;
  padding: 2px 3px 0 0;
  background: #f3f8ff;
  box-shadow: none;
  color: #000;
}

.tabs .active span {
  display: block;
  height: 27px;
  background: #f5fa00;
  line-height: 23px;
}

.tabpage {
  display: flex;
  gap: 6px;
  flex: none;
  height: 174px;
  padding: 8px 0 8px 8px;
  border: 1px solid #8ea5cd;
  border-right: 0;
  background: #f3f8ff;
}

.linked {
  flex: none;
  width: calc(100% - 192px);
}

.tabpage .tablewrap {
  position: relative;
}

.underline {
  position: absolute;
  top: 37px;
  left: 51px;
  width: 92px;
  height: 2px;
  background: #ea1c2c;
}

.filterbar {
  display: flex;
  align-items: center;
  flex: none;
  height: 29px;
  padding: 0 4px;
  background: #e2eeff;
}

.clear {
  width: 14px;
  height: 14px;
  margin-right: 4px;
}

.clear svg {
  display: block;
  width: 8px;
  height: 8px;
  margin: 2px auto 0;
}

.filterbar label {
  margin-left: 10px;
  color: #15428b;
}

.filterbar input {
  display: grid;
  place-items: center;
  width: 12px;
  height: 12px;
  appearance: none;
  border: 1px solid #9fb7d6;
  background: #f4f8fd;
}

.filterbar input:checked::before {
  content: "";
  width: 8px;
  height: 8px;
  background: #3f5068;
  clip-path: polygon(0 40%, 20% 30%, 42% 60%, 82% 0, 100% 8%, 48% 100%, 36% 100%);
}

.custom {
  width: 64px;
  height: 21px;
  margin-left: auto;
  border: 1px solid #7b9cc4;
  border-radius: 2px;
  background: linear-gradient(#eef5fe 50%, #cfe1f6 51%, #e2f0fd);
  color: #000;
}

.amounts {
  flex: 1;
  min-width: 0;
  padding: 11px 0 0 7px;
  overflow: hidden;
  border: 1px solid #6593cf;
  border-right: 0;
  background: #e2eeff;
}

.amountrow, .totalrow {
  display: flex;
  align-items: center;
  height: 19px;
}

.amountrow label {
  flex: none;
  width: 69px;
}

.amountrow .field {
  flex: none;
  width: 118px;
  height: 19px;
}

.totals {
  display: flex;
  flex: none;
  margin-top: 9px;
}

fieldset {
  width: 204px;
  height: 102px;
  margin: 0;
  padding: 0;
  border: 1px solid #6593cf;
}

fieldset.small {
  width: 168px;
}

fieldset h3 {
  height: 19px;
  margin: 0;
  padding-left: 10px;
  border-bottom: 1px solid #6593cf;
  background: linear-gradient(#e8f2ff, #afd2ff);
  font-size: 11px;
  font-weight: 400;
  line-height: 19px;
}

.rows {
  padding: 11px 8px 0 7px;
}

.totalrow {
  gap: 6px;
}

.totalrow label {
  flex: none;
  width: 43px;
}

.small label {
  width: 45px;
}

.totalrow .field {
  flex: 1;
  height: 19px;
}

.totalrow.pair {
  height: 21px;
}

.pagescroll {
  display: flex;
  align-items: center;
  flex: none;
  height: 17px;
  background: #f0f0f0;
}

.pagescroll .thumb {
  flex: 1;
  height: 15px;
}

.pagescroll .arrow:last-child {
  margin-left: 33px;
}
</style>
